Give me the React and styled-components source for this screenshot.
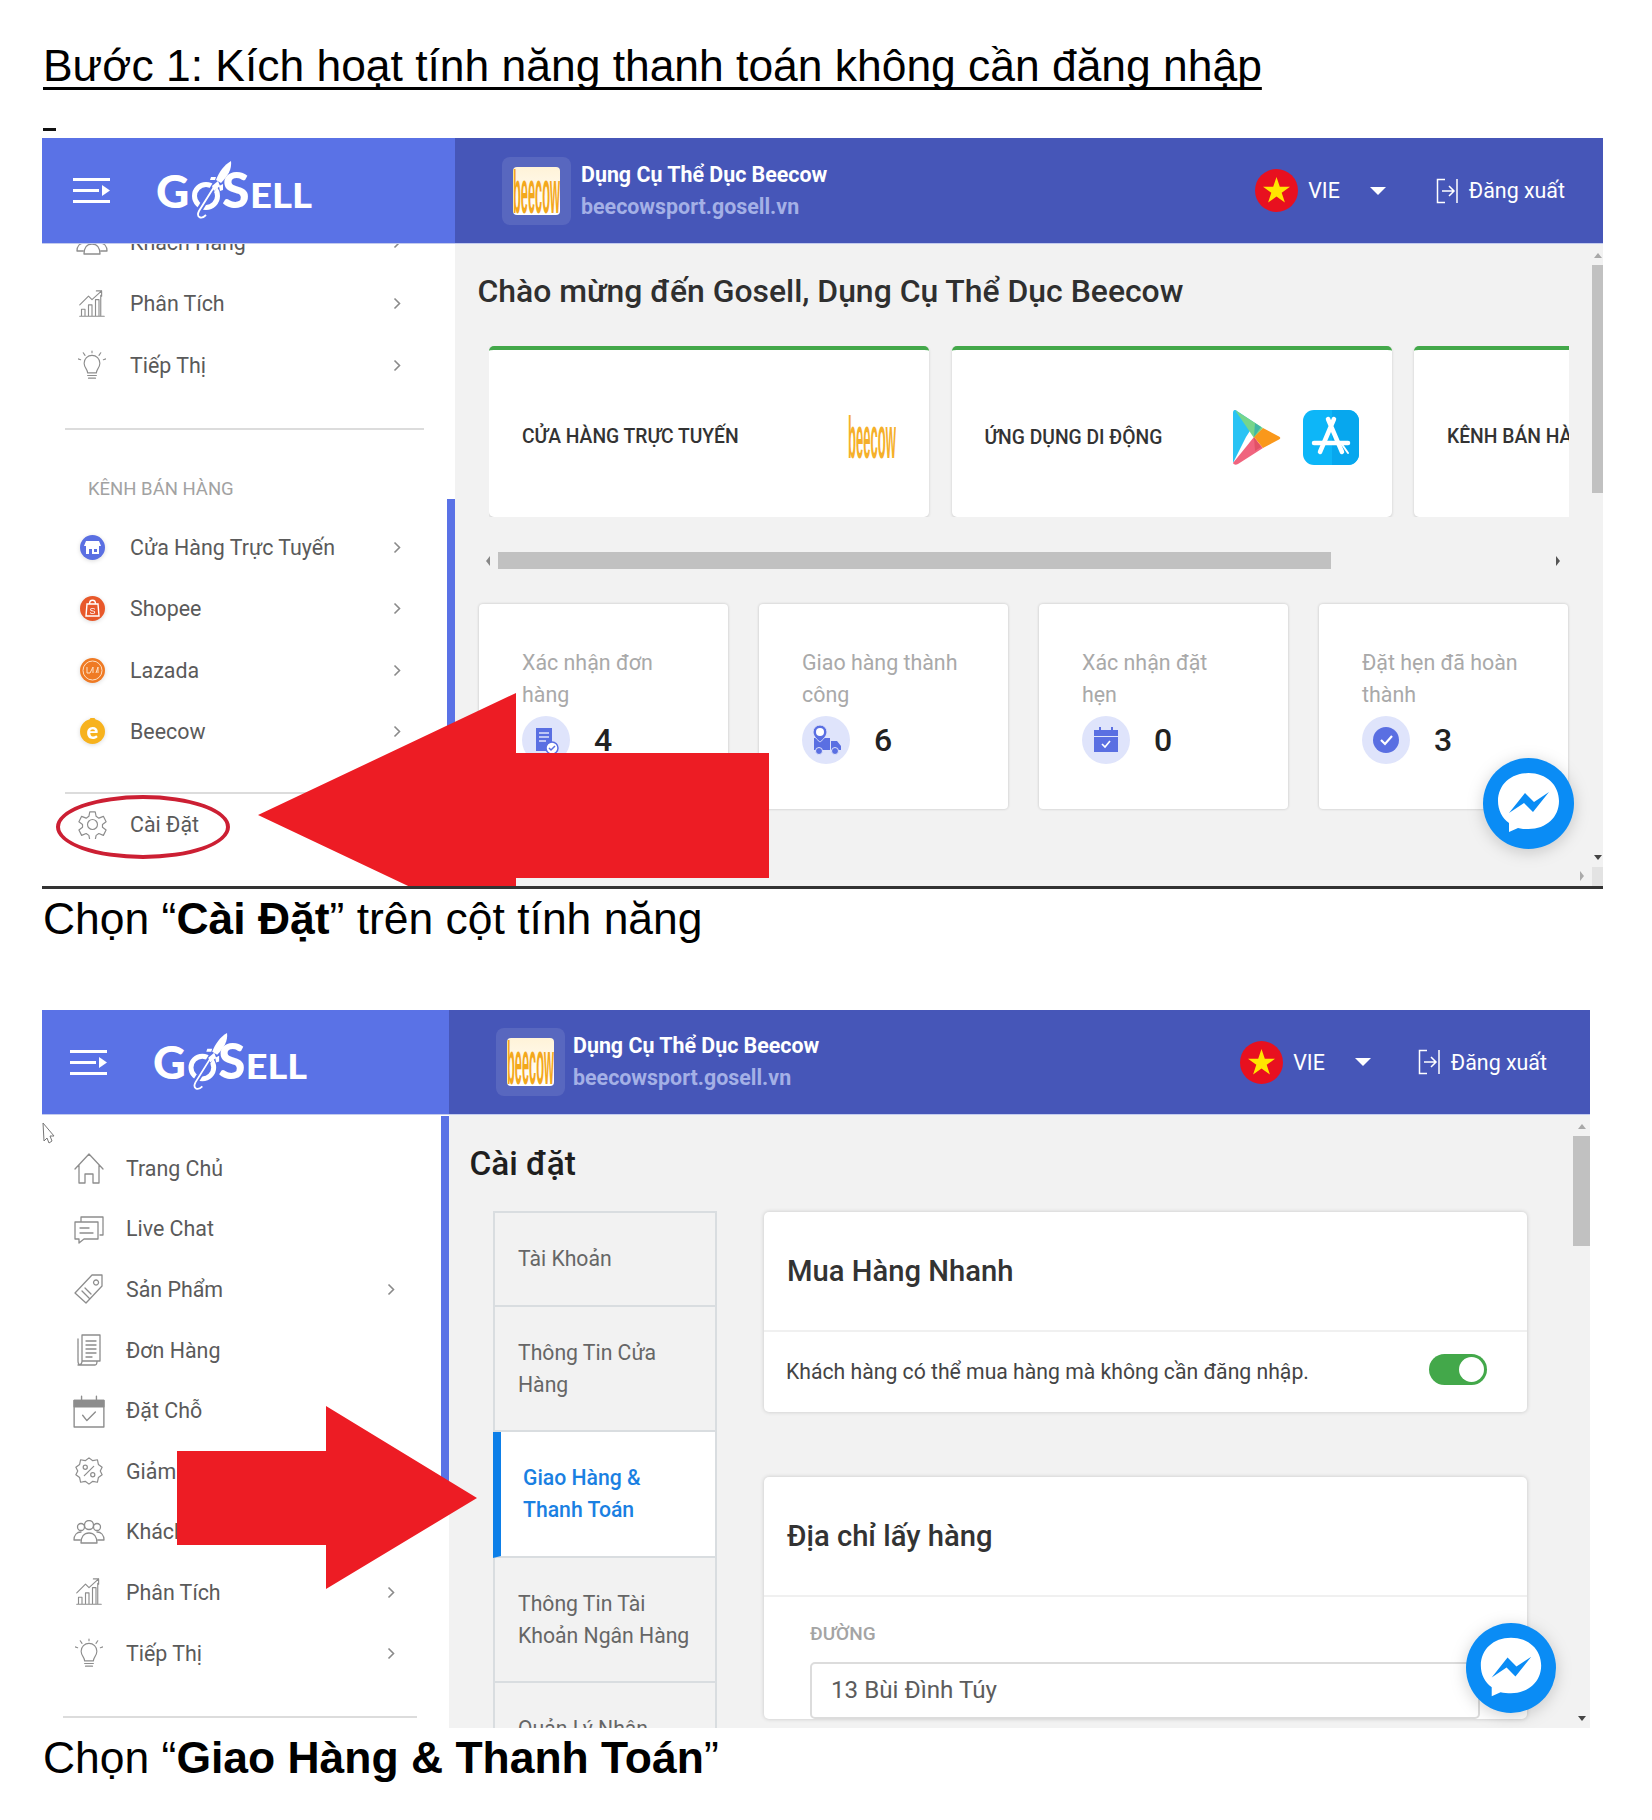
import React from 'react';
import styled, { createGlobalStyle } from 'styled-components';

const Global = createGlobalStyle`
  html, body { margin: 0; padding: 0; background: #fff; }
  * { box-sizing: border-box; }
`;

const Page = styled.div`
  width: 1652px;
  height: 1820px;
  padding: 38px 0 0 42px;
  background: #fff;
  overflow: hidden;
  font-family: "Liberation Sans", Arial, sans-serif;
  color: #000;
`;
const Title = styled.h1`
  margin: 0 0 0 1px;
  font-size: 44.4px;
  font-weight: 400;
  line-height: 56px;
  text-decoration: underline;
  text-decoration-thickness: 3px;
  text-underline-offset: 6px;
  text-decoration-skip-ink: none;
  white-space: nowrap;
`;
const Dash = styled.div`
  width: 13px;
  height: 3px;
  margin: 34px 0 7px 1px;
  background: #111;
`;
const Caption = styled.p`
  margin: 0 0 0 1px;
  font-size: 44.45px;
  line-height: 60px;
  white-space: nowrap;
  b { font-weight: 700; }
`;
const Shot = styled.section`
  position: relative;
  display: flex;
  flex-direction: column;
  width: ${p => p.$w}px;
  height: ${p => p.$h}px;
  margin-top: ${p => p.$gap || 0}px;
  overflow: hidden;
  border-bottom: ${p => (p.$line ? '3px solid #333' : '0')};
  font-family: Roboto, "Noto Sans", sans-serif;
  background: #f2f2f2;
`;
const Header = styled.header`
  display: flex;
  flex: none;
  height: ${p => p.$h}px;
  border-bottom: 1px solid #c3cbee;
  position: relative;
  z-index: 2;
`;
const HeaderLeft = styled.div`
  display: flex;
  align-items: center;
  flex: none;
  gap: 44px;
  width: ${p => p.$w}px;
  padding-left: ${p => p.$pad}px;
  background: #5a72e6;
`;
const LogoMark = styled.svg`
  margin-top: -3px;
`;
const HeaderRight = styled.div`
  display: flex;
  flex: 1;
  align-items: center;
  padding: 0 ${p => p.$right}px 0 47px;
  background: #4656b8;
  color: #fff;
`;
const Tile = styled.div`
  display: flex;
  align-items: center;
  justify-content: center;
  width: 69px;
  height: 68px;
  flex: none;
  border-radius: 8px;
  background: rgba(255, 255, 255, 0.1);
`;
const TileImage = styled.div`
  width: 47px;
  height: 48px;
  border-radius: 4px;
  overflow: hidden;
  background: linear-gradient(#fff3d8, #fff);
  svg { display: block; }
`;
const Store = styled.div`
  margin-left: ${p => p.$gap}px;
  font-weight: 700;
`;
const StoreName = styled.div`
  font-size: 21.4px;
  line-height: 32px;
  white-space: nowrap;
`;
const StoreUrl = styled.div`
  font-size: 21.4px;
  line-height: 32px;
  color: #a4b0e6;
  white-space: nowrap;
`;
const Lang = styled.div`
  display: flex;
  align-items: center;
  margin-left: auto;
  font-size: 21.4px;
`;
const Flag = styled.svg`
  width: 43px;
  height: 43px;
  margin-right: 10px;
`;
const Caret = styled.span`
  width: 0;
  height: 0;
  margin-left: 30px;
  border-left: 8px solid transparent;
  border-right: 8px solid transparent;
  border-top: 8px solid #fff;
`;
const Logout = styled.div`
  display: flex;
  align-items: center;
  gap: 11px;
  margin-left: ${p => p.$gap}px;
  font-size: 21.4px;
  white-space: nowrap;
`;
const Body = styled.div`
  display: flex;
  flex: 1;
  min-height: 0;
`;
const Side = styled.nav`
  position: relative;
  flex: none;
  width: ${p => p.$w}px;
  padding-top: ${p => p.$top}px;
  margin-top: ${p => p.$shift}px;
  background: #fff;
  color: #5a5a5a;
`;
const SideBar = styled.span`
  position: absolute;
  right: 0;
  top: ${p => p.$top}px;
  width: 8px;
  height: ${p => p.$h}px;
  background: #5a72e6;
`;
const Row = styled.div`
  display: flex;
  align-items: center;
  height: ${p => p.$h}px;
  padding: 0 54px 0 ${p => p.$pad}px;
  font-size: 21.4px;
`;
const IconBox = styled.span`
  display: flex;
  align-items: center;
  justify-content: center;
  flex: none;
  width: 40px;
  margin-right: ${p => p.$gap}px;
`;
const Chevron = styled.svg`
  width: 8px;
  height: 13px;
  margin-left: auto;
`;
const Divider = styled.hr`
  height: 2px;
  margin: ${p => p.$top}px ${p => p.$right}px 0 ${p => p.$left}px;
  border: 0;
  background: #dcdcdc;
`;
const SideLabel = styled.div`
  margin: 44px 0 13px 46px;
  font-size: 18.5px;
  line-height: 30px;
  color: #a2a2a2;
`;
const Main = styled.main`
  flex: 1;
  min-width: 0;
  padding: 27px 0 0 ${p => p.$pad}px;
  overflow: hidden;
`;
const Heading = styled.h2`
  margin: 0 0 0 -1.5px;
  font-size: ${p => p.$size}px;
  font-weight: 500;
  line-height: 40px;
  color: ${p => p.$color};
  white-space: nowrap;
`;
const Channels = styled.div`
  display: flex;
  gap: 22.5px;
  width: 1080px;
  margin: 35px 0 0 10px;
  overflow: hidden;
`;
const Channel = styled.div`
  display: flex;
  align-items: center;
  justify-content: space-between;
  flex: none;
  width: 440px;
  height: 171px;
  padding: ${p => p.$dy}px 33px 0;
  background: #fff;
  border-top: 4px solid #43a84a;
  border-radius: 5px;
  box-shadow: 0 1px 3px rgba(0, 0, 0, 0.16);
  font-size: 19.3px;
  font-weight: 500;
  color: #333;
  white-space: nowrap;
`;
const AppIcons = styled.div`
  display: flex;
  gap: 22px;
`;
const HScroll = styled.div`
  display: flex;
  align-items: center;
  width: 1090px;
  height: 17px;
  margin: 35px 0 0 7px;
`;
const HThumb = styled.div`
  width: 833px;
  height: 17px;
  margin-left: 8px;
  background: #c1c1c1;
`;
const Tri = styled.span`
  width: 0;
  height: 0;
  flex: none;
  border-style: solid;
  border-color: transparent;
  ${p => p.$dir === 'left' && `border-width: 5px 4px 5px 0; border-right-color: #888;`}
  ${p => p.$dir === 'right' && `border-width: 5px 0 5px 4px; border-left-color: #555;`}
  ${p => p.$dir === 'up' && `border-width: 0 4px 5px; border-bottom-color: #a8a8a8;`}
  ${p => p.$dir === 'down' && `border-width: 5px 4px 0; border-top-color: #444;`}
`;
const HEnd = styled.span`
  display: flex;
  margin-left: 225px;
`;
const Stats = styled.div`
  display: flex;
  gap: 31px;
  margin-top: 35px;
`;
const Stat = styled.div`
  flex: none;
  width: 249px;
  height: 205px;
  padding: 43px 46px 0 43px;
  background: #fff;
  border-radius: 4px;
  box-shadow: 0 0 3px rgba(0, 0, 0, 0.2);
`;
const StatLabel = styled.div`
  font-size: 21.4px;
  line-height: 32px;
  color: #a9a9a9;
  height: 64px;
`;
const StatLine = styled.div`
  display: flex;
  align-items: center;
  gap: 24px;
  margin-top: 5px;
`;
const StatIcon = styled.span`
  display: flex;
  align-items: center;
  justify-content: center;
  width: 48px;
  height: 48px;
  border-radius: 50%;
  background: #dfe4fb;
`;
const StatNumber = styled.span`
  font-size: 32px;
  font-weight: 500;
  color: #222;
`;
const Rail = styled.div`
  position: relative;
  display: flex;
  flex-direction: column;
  align-items: center;
  flex: none;
  width: ${p => p.$w}px;
  padding-top: 9px;
`;
const RailThumb = styled.div`
  width: 100%;
  height: ${p => p.$h}px;
  margin: 7px 0 0;
  background: #c1c1c1;
`;
const RailEnd = styled.div`
  display: flex;
  margin-top: auto;
  padding-bottom: ${p => p.$bottom}px;
`;
const Corner = styled.div`
  width: 100%;
  height: 19px;
  margin-top: 7px;
  background: #e3e3e3;
`;
const CornerArrow = styled.span`
  position: absolute;
  right: 19px;
  bottom: 5px;
  display: flex;
  ${Tri} { border-left-color: #aaa; }
`;
const Oval = styled.span`
  position: absolute;
  left: 14px;
  top: 657px;
  width: 174px;
  height: 64px;
  border: 4px solid #cc1f33;
  border-radius: 50%;
`;
const RedArrow = styled.svg`
  position: absolute;
  left: ${p => p.$x}px;
  top: ${p => p.$y}px;
  z-index: 3;
`;
const Messenger = styled.svg`
  position: absolute;
  left: ${p => p.$x}px;
  top: ${p => p.$y}px;
  z-index: 4;
  filter: drop-shadow(0 3px 8px rgba(0, 0, 0, 0.18));
`;
const Cursor = styled.svg`
  position: absolute;
  left: 0;
  top: 112px;
`;
const SettingsMain = styled.main`
  flex: 1;
  min-width: 0;
  padding: 29px 0 0 22px;
  overflow: hidden;
`;
const Columns = styled.div`
  display: flex;
  gap: 47px;
  margin: 27px 0 0 22px;
`;
const Tabs = styled.div`
  flex: none;
  width: 224px;
  border-top: 2px solid #d9dde0;
`;
const Tab = styled.div`
  padding: 30px 23px 29.5px ${p => (p.$active ? 22 : 23)}px;
  border-left: ${p => (p.$active ? '8px solid #0d7fe8' : '2px solid #d9dde0')};
  border-right: 2px solid #d9dde0;
  border-bottom: 2px solid #d9dde0;
  background: ${p => (p.$active ? '#fff' : 'transparent')};
  color: ${p => (p.$active ? '#1a80e2' : '#666')};
  font-weight: ${p => (p.$active ? 500 : 400)};
  font-size: 21.2px;
  line-height: 32px;
`;
const Cards = styled.div`
  flex: none;
  width: 763px;
  margin-top: 1px;
`;
const Card = styled.div`
  margin-bottom: 65px;
  background: #fff;
  border-radius: 5px;
  box-shadow: 0 0 4px rgba(0, 0, 0, 0.18);
`;
const CardHead = styled.div`
  display: flex;
  align-items: center;
  height: 120px;
  padding-left: 23px;
  border-bottom: 2px solid #f0f0f0;
  font-size: 29.2px;
  font-weight: 500;
  color: #333;
`;
const CardRow = styled.div`
  display: flex;
  align-items: center;
  justify-content: space-between;
  height: 80px;
  padding: 0 40px 2px 22px;
  font-size: 21.2px;
  color: #444;
`;
const Toggle = styled.span`
  display: flex;
  justify-content: flex-end;
  width: 58px;
  height: 31px;
  margin-top: -3px;
  padding: 3px;
  border-radius: 16px;
  background: #43a84a;
`;
const Knob = styled.span`
  width: 25px;
  height: 25px;
  border-radius: 50%;
  background: #fff;
`;
const Field = styled.div`
  padding: 25px 46px 0;
`;
const FieldLabel = styled.div`
  font-size: 19px;
  font-weight: 500;
  line-height: 24px;
  color: #a4a4a4;
`;
const Input = styled.div`
  display: flex;
  align-items: center;
  width: 670px;
  height: 57px;
  margin-top: 16px;
  padding: 0 0 2px 19px;
  border: 2px solid #dcdcdc;
  border-radius: 5px;
  font-size: 24.2px;
  color: #5c5c5c;
`;

const stroke = { fill: 'none', stroke: '#8d8d8d', strokeWidth: 1.3, strokeLinejoin: 'round', strokeLinecap: 'round' };
const Ico = ({ children, w = 32, h = 32, vb = '0 0 32 32' }) => (
  <svg width={w} height={h} viewBox={vb} {...stroke}>{children}</svg>
);
const icons = {
  home: <Ico><path d="M2 17 16 2l14 15M6 13v18h6v-9h8v9h6V13" /></Ico>,
  chat: <Ico><path d="M8 8V4h22v18h-3M2 9h23v17H11l-5 4v-4H2zM7 15h9M7 20h13" /></Ico>,
  tag: <Ico><path d="M19 2h10v11L13 30 2 20zM23 7a2.5 2.5 0 1 0 .1 0M9 18l7 7M12 15l6 6" /></Ico>,
  doc: <Ico w={26} h={32} vb="3 0 26 32"><path d="M9 1h18v26H9zM9 27c0 3-2 4-4 4h17c2 0 2-2 2-4M5 5v22c0 3 1 4 3 4M13 7h10M13 11h10M13 15h10M13 19h10M13 23h6" /></Ico>,
  cal: <Ico w={34} h={34}><path d="M2 6h28v25H2zM10 20l4 5 8-8" /><path d="M2 6h28v6H2z" fill="#8d8d8d" /><path d="M9 2v6M23 2v6" /></Ico>,
  percent: <Ico w={30} h={30}><path d="M16 2l4 3 5-1 1 5 4 3-2 4 2 4-4 3-1 5-5-1-4 3-4-3-5 1-1-5-4-3 2-4-2-4 4-3 1-5 5 1zM21 11 11 21" /><circle cx="12" cy="12" r="2.2" /><circle cx="20" cy="20" r="2.2" /></Ico>,
  people: <Ico w={32} h={24} vb="0 4 32 24"><circle cx="8" cy="11" r="3.5" /><circle cx="24" cy="11" r="3.5" /><circle cx="16" cy="9" r="4.5" /><path d="M1 24c0-5 3-8 7-8M31 24c0-5-3-8-7-8M8 27c0-6 3-10 8-10s8 4 8 10zM1 24h6M25 24h6" /></Ico>,
  chart: <Ico w={28} h={32}><path d="M2 30h28M4 29v-7h4v7M12 29V17h4v12M20 29V11h4v18M26 29V6M2 17 12 7l4 4L27 1M21 1h6v6" /></Ico>,
  bulb: <Ico w={28} h={32}><path d="M11 25c0-4-4-6-4-11a9 9 0 0 1 18 0c0 5-4 7-4 11zM11 28h10M12 31h8M16 0v2M6 2l2 3M26 2l-2 3M0 9l3 1M32 9l-3 1" /></Ico>,
  gear: <Ico w={29} h={29}><circle cx="16" cy="16" r="5.5" /><path d="M13 2h6l1 5 3 2 5-2 3 6-4 3v3l4 3-3 6-5-2-3 2-1 5h-6l-1-5-3-2-5 2-3-6 4-3v-3L1 13l3-6 5 2 3-2z" /></Ico>,
};

const Round = ({ bg, children }) => (
  <svg width="27" height="27" viewBox="0 0 27 27" style={{ filter: 'drop-shadow(0 1px 2px rgba(0,0,0,.14))' }}>
    <circle cx="13.5" cy="13.5" r="12.5" fill={bg} />
    {children}
  </svg>
);
const channelIcons = {
  shop: <Round bg="#5a6fe2"><path d="M7 7h13l2 5H5z" fill="#fff" /><path d="M7 12h13v8H7z" fill="#fff" /><path d="M10 15h3v5h-3zM15 15h3v3h-3z" fill="#5a6fe2" /></Round>,
  shopee: <Round bg="#e8582a"><path d="M8 9h11l1 12H7z" fill="none" stroke="#fff" strokeWidth="1.4" /><path d="M10.500 9c0-5 6-5 6 0" fill="none" stroke="#fff" strokeWidth="1.4" /><text x="13.500" y="19" textAnchor="middle" fontSize="9" fill="#fff" fontFamily="Liberation Sans">S</text></Round>,
  lazada: <Round bg="#ef7a24"><circle cx="13.500" cy="13.500" r="9.500" fill="none" stroke="#fde0c4" strokeWidth="1" /><path d="M8 10v6h3l3-6v6M17 16l2-6v6" fill="none" stroke="#fde0c4" strokeWidth="1" /></Round>,
  beecow: <Round bg="#f7b21d"><circle cx="13.500" cy="2.500" r="3" fill="#f7b21d" /><text x="13.500" y="21" textAnchor="middle" fontSize="22" fontWeight="900" fill="#fff" fontFamily="Lato">e</text></Round>,
};

const Chev = () => (
  <Chevron viewBox="0 0 8 13"><path d="M1.500 1.500 6.500 6.500 1.500 11.500" fill="none" stroke="#8a8a8a" strokeWidth="1.6" /></Chevron>
);

const Hamburger = () => (
  <svg width="37" height="25" viewBox="0 0 37 25">
    <path d="M0 1.500h37M0 23.500h37M0 12.500h26" stroke="#fff" strokeWidth="3" />
    <path d="M29 7l8 5.500-8 5.500z" fill="#fff" />
  </svg>
);
const Logo = ({ w }) => (
  <LogoMark width={w} height={w * 0.375} viewBox="0 0 160 60">
    <text x="2" y="49" fontFamily="Lato" fontWeight="900" fontSize="46" fill="#fff">G</text>
    <text x="68" y="49" fontFamily="Lato" fontWeight="900" fontSize="50" fill="#fff">S</text>
    <text x="96" y="49" fontFamily="Lato" fontWeight="900" fontSize="35" fill="#fff" textLength="62" lengthAdjust="spacingAndGlyphs">ELL</text>
    <circle cx="52" cy="37" r="11.500" fill="none" stroke="#fff" strokeWidth="5" />
    <path d="M41 58 66 18" stroke="#5a72e6" strokeWidth="6" />
    <path d="M77 2c1 8-3 15-10 22l-5-3C65 13 70 6 77 2z" fill="#fff" />
    <path d="M58 27 64 22 66 27 60 32zM62 18l-5 0-1 3 5 0zM69 25l0 6-3 1-1-5z" fill="#fff" />
    <path d="M60 28 45 52c-3 6 2 9 7 4" fill="none" stroke="#fff" strokeWidth="1.8" />
  </LogoMark>
);
const BeecowMark = ({ w, h, size, y, color = '#f3a81c' }) => (
  <svg width={w} height={h} viewBox={`0 0 ${w} ${h}`}>
    <text
      transform={`translate(0 ${y}) scale(${w / (size * 3.668)} 1)`}
      fontFamily="Liberation Sans"
      fontWeight="700"
      fontSize={size}
      fill={color}
    >
      beecow
    </text>
  </svg>
);
const FlagIcon = () => (
  <Flag viewBox="0 0 43 43">
    <circle cx="21.500" cy="21.500" r="21.500" fill="#e8101f" />
    <path d="M21.500 8l3.300 9.800h10.200l-8.300 6 3.200 9.800-8.400-6.100-8.400 6.100 3.200-9.800-8.300-6h10.200z" fill="#ffe600" />
  </Flag>
);
const LogoutIcon = () => (
  <svg width="22" height="26" viewBox="0 0 22 26" fill="none" stroke="#fff" strokeWidth="1.5">
    <path d="M9 1.500H1.500v23H9M6 13h12M13 8l5 5-5 5M21 1v24" />
  </svg>
);
const PlayIcon = () => (
  <svg width="48" height="55" viewBox="0 0 48 55">
    <path d="M0 3c0-3 2-4 4-2l18 12L13 27 0 53z" fill="#29c3f4" />
    <path d="M2 0 30 18l-9 10z" fill="#76d58b" />
    <path d="M22 13l6 4-7 10z" fill="#3fb7a6" />
    <path d="M0 53c1 2 3 2 5 1l25-16-9-11z" fill="#f0647e" />
    <path d="M21 27l7 10-6 4z" fill="#e25266" />
    <path d="M30 18l15 8c3 1 3 3 0 4l-15 8-9-11z" fill="#fa981b" />
  </svg>
);
const StoreIcon = () => (
  <svg width="56" height="55" viewBox="0 0 56 55">
    <rect width="56" height="55" rx="11" fill="#0db6f8" />
    <path d="M29 0h16a11 11 0 0 1 11 11v33a11 11 0 0 1-11 11H29z" fill="#07a7ee" />
    <path d="M25 9 39 42M31 9 17 42" stroke="#fff" strokeWidth="4.500" strokeLinecap="round" fill="none" />
    <path d="M11 33H45" stroke="#fff" strokeWidth="4.500" strokeLinecap="round" />
    <path d="M38 33l7 10" stroke="#fff" strokeWidth="2" strokeLinecap="round" />
  </svg>
);
const statIcons = [
  <svg key="a" width="30" height="30" viewBox="0 0 30 30"><path d="M5 3h16v23H5z" fill="#5a6fe2" /><path d="M8 8h10M8 12h10M8 16h7" stroke="#dfe4fb" strokeWidth="1.500" /><circle cx="21" cy="23" r="6" fill="#fff" stroke="#5a6fe2" strokeWidth="1.500" /><path d="M18 23l2 2 4-4" fill="none" stroke="#5a6fe2" strokeWidth="1.500" /></svg>,
  <svg key="b" width="34" height="32" viewBox="0 0 34 32"><path d="M5 14h16v12H5zM22 17h6l4 5v4H22z" fill="#5a6fe2" /><circle cx="10" cy="27" r="3.500" fill="#5a6fe2" stroke="#dfe4fb" /><circle cx="26" cy="27" r="3.500" fill="#5a6fe2" stroke="#dfe4fb" /><path d="M11 1a7 7 0 0 1 7 7c0 5-7 10-7 10S4 13 4 8a7 7 0 0 1 7-7z" fill="#5a6fe2" stroke="#dfe4fb" /><circle cx="11" cy="8" r="4" fill="#fff" /></svg>,
  <svg key="c" width="26" height="26" viewBox="0 0 26 26"><path d="M1 3h24v6H1zM1 10h24v15H1z" fill="#5a6fe2" /><path d="M7 0v5M19 0v5" stroke="#5a6fe2" strokeWidth="2" /><path d="M9 17l3 3 5-6" fill="none" stroke="#fff" strokeWidth="1.700" /></svg>,
  <svg key="d" width="26" height="26" viewBox="0 0 26 26"><circle cx="13" cy="13" r="13" fill="#5a6fe2" /><path d="M8 13l4 4 7-8" fill="none" stroke="#fff" strokeWidth="2.200" /></svg>,
];
const MessengerIcon = ({ x, y, size }) => (
  <Messenger $x={x} $y={y} width={size} height={size} viewBox="0 0 91 91">
    <circle cx="45.500" cy="45.500" r="45.500" fill="#0a8cf5" />
    <path d="M45.500 15C27.500 15 15 27 15 43c0 9 4 17 11 22v9l9-4c3 1 7 1 10.500 1C63.500 71 76 59 76 43S63.500 15 45.500 15z" fill="#fff" />
    <path d="M26 55 42 35l9 9 15-10-16 20-9-9z" fill="#0a8cf5" />
  </Messenger>
);

const rowsTop = [
  { icon: 'people', text: 'Khách Hàng', more: true },
  { icon: 'chart', text: 'Phân Tích', more: true },
  { icon: 'bulb', text: 'Tiếp Thị', more: true },
];
const rowsChannels = [
  { icon: 'shop', text: 'Cửa Hàng Trực Tuyến', more: true },
  { icon: 'shopee', text: 'Shopee', more: true },
  { icon: 'lazada', text: 'Lazada', more: true },
  { icon: 'beecow', text: 'Beecow', more: true },
];
const rowsAll = [
  { icon: 'home', text: 'Trang Chủ' },
  { icon: 'chat', text: 'Live Chat' },
  { icon: 'tag', text: 'Sản Phẩm', more: true },
  { icon: 'doc', text: 'Đơn Hàng' },
  { icon: 'cal', text: 'Đặt Chỗ' },
  { icon: 'percent', text: 'Giảm Giá' },
  { icon: 'people', text: 'Khách Hàng' },
  { icon: 'chart', text: 'Phân Tích', more: true },
  { icon: 'bulb', text: 'Tiếp Thị', more: true },
];
const stats = [
  ['Xác nhận đơn hàng', 4],
  ['Giao hàng thành công', 6],
  ['Xác nhận đặt hẹn', 0],
  ['Đặt hẹn đã hoàn thành', 3],
];

const TopBar = ({ h, left, pad, logo, right, gap, exit }) => (
  <Header $h={h}>
    <HeaderLeft $w={left} $pad={pad}>
      <Hamburger />
      <Logo w={logo} />
    </HeaderLeft>
    <HeaderRight $right={right}>
      <Tile><TileImage><BeecowMark w={47} h={48} size={62} y={46} /></TileImage></Tile>
      <Store $gap={gap}>
        <StoreName>Dụng Cụ Thể Dục Beecow</StoreName>
        <StoreUrl>beecowsport.gosell.vn</StoreUrl>
      </Store>
      <Lang><FlagIcon />VIE<Caret /></Lang>
      <Logout $gap={exit}><LogoutIcon />Đăng xuất</Logout>
    </HeaderRight>
  </Header>
);
const NavRow = ({ item, h, pad, gap, set }) => (
  <Row $h={h} $pad={pad}>
    <IconBox $gap={gap}>{set[item.icon]}</IconBox>
    {item.text}
    {item.more && <Chev />}
  </Row>
);

export default function App() {
  return (
    <Page>
      <Global />
      <Title>Bước 1: Kích hoạt tính năng thanh toán không cần đăng nhập</Title>
      <Dash />
      <Shot $w={1561} $h={751} $line>
        <TopBar h={106} left={413} pad={31} logo={160} right={38} gap={10} exit={50} />
        <Body>
          <Side $w={413} $top={0} $shift={-32}>
            <SideBar $top={287} $h={285} />
            {rowsTop.map(r => <NavRow key={r.text} item={r} h={61.3} pad={30} gap={18} set={icons} />)}
            <Divider $top={32} $right={31} $left={23} />
            <SideLabel>KÊNH BÁN HÀNG</SideLabel>
            {rowsChannels.map(r => <NavRow key={r.text} item={r} h={61.3} pad={30} gap={18} set={channelIcons} />)}
            <Divider $top={30} $right={31} $left={23} />
            <NavRow item={{ icon: 'gear', text: 'Cài Đặt' }} h={61.3} pad={30} gap={18} set={icons} />
          </Side>
          <Main $pad={24}>
            <Heading $size={31.9} $color="#2f2f2f">Chào mừng đến Gosell, Dụng Cụ Thể Dục Beecow</Heading>
            <Channels>
              <Channel $dy={5}>CỬA HÀNG TRỰC TUYẾN<BeecowMark w={48} h={48} size={60} y={46} color="#f5b02a" /></Channel>
              <Channel $dy={7}>ỨNG DỤNG DI ĐỘNG<AppIcons><PlayIcon /><StoreIcon /></AppIcons></Channel>
              <Channel $dy={5}>KÊNH BÁN HÀNG</Channel>
            </Channels>
            <HScroll><Tri $dir="left" /><HThumb /><HEnd><Tri $dir="right" /></HEnd></HScroll>
            <Stats>
              {stats.map(([label, n], i) => (
                <Stat key={label}>
                  <StatLabel>{label}</StatLabel>
                  <StatLine><StatIcon>{statIcons[i]}</StatIcon><StatNumber>{n}</StatNumber></StatLine>
                </Stat>
              ))}
            </Stats>
          </Main>
          <Rail $w={11}>
            <Tri $dir="up" />
            <RailThumb $h={228} />
            <RailEnd $bottom={0}><Tri $dir="down" /></RailEnd>
            <Corner />
            <CornerArrow><Tri $dir="right" /></CornerArrow>
          </Rail>
        </Body>
        <Oval />
        <RedArrow $x={216} $y={555} width="511" height="244" viewBox="0 0 511 244">
          <path d="M0 122 258 0v60h253v125H258v59z" fill="#ed1c24" />
        </RedArrow>
        <MessengerIcon x={1441} y={620} size={91} />
      </Shot>
      <Caption>Chọn “<b>Cài Đặt</b>” trên cột tính năng</Caption>
      <Shot $w={1548} $h={718} $gap={61}>
        <TopBar h={105} left={407} pad={28} logo={158} right={43} gap={8} exit={47} />
        <Body>
          <Side $w={407} $top={23} $shift={0}>
            <SideBar $top={1} $h={380} />
            {rowsAll.map(r => <NavRow key={r.text} item={r} h={60.6} pad={27} gap={17} set={icons} />)}
            <Divider $top={33} $right={32} $left={21} />
          </Side>
          <SettingsMain>
            <Heading $size={33.4} $color="#1f1f1f">Cài đặt</Heading>
            <Columns>
              <Tabs>
                <Tab>Tài Khoản</Tab>
                <Tab>Thông Tin Cửa Hàng</Tab>
                <Tab $active>Giao Hàng &amp; Thanh Toán</Tab>
                <Tab>Thông Tin Tài Khoản Ngân Hàng</Tab>
                <Tab>Quản Lý Nhân Viên</Tab>
              </Tabs>
              <Cards>
                <Card>
                  <CardHead>Mua Hàng Nhanh</CardHead>
                  <CardRow>Khách hàng có thể mua hàng mà không cần đăng nhập.<Toggle><Knob /></Toggle></CardRow>
                </Card>
                <Card>
                  <CardHead>Địa chỉ lấy hàng</CardHead>
                  <Field>
                    <FieldLabel>ĐƯỜNG</FieldLabel>
                    <Input>13 Bùi Đình Túy</Input>
                  </Field>
                </Card>
              </Cards>
            </Columns>
          </SettingsMain>
          <Rail $w={17}>
            <Tri $dir="up" />
            <RailThumb $h={110} />
            <RailEnd $bottom={7}><Tri $dir="down" /></RailEnd>
          </Rail>
        </Body>
        <Cursor width="14" height="22" viewBox="0 0 14 22" fill="none" stroke="#777" strokeWidth="1">
          <path d="M1 1 12 14 8 14 10 19 7 21 5 16 2 19z" />
        </Cursor>
        <RedArrow $x={135} $y={396} width="300" height="183" viewBox="0 0 300 183">
          <path d="M0 45h149V0l151 92-151 91v-44H0z" fill="#ed1c24" />
        </RedArrow>
        <MessengerIcon x={1424} y={613} size={90} />
      </Shot>
      <Caption>Chọn “<b>Giao Hàng &amp; Thanh Toán</b>”</Caption>
    </Page>
  );
}
